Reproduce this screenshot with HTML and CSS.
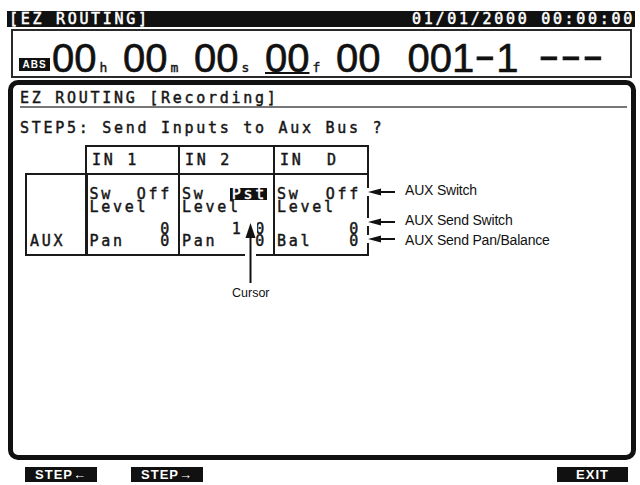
FILE: index.html
```html
<!DOCTYPE html>
<html>
<head>
<meta charset="utf-8">
<link rel="stylesheet" href="styles.css">
</head>
<body>
<div class="topbar"><span class="pre">[EZ ROUTING]</span><span class="pre">01/01/2000 00:00:00</span></div>
<div class="timebox">
  <span class="abs">ABS</span>
  <span class="grp"><span class="big">00</span><span class="unit">h</span></span>
  <span class="grp"><span class="big">00</span><span class="unit">m</span></span>
  <span class="grp"><span class="big">00</span><span class="unit">s</span></span>
  <span class="grp"><span class="big ul">00</span><span class="unit">f</span></span>
  <span class="big">00</span>
  <span class="big meas">001<span class="hy">-</span>1</span>
  <span class="big dashes"><span class="hy">-</span><span class="hy">-</span><span class="hy">-</span></span>
</div>
<div class="panel">
  <div class="ptitle pre">EZ ROUTING [Recording]</div>
  <div class="step pre">STEP5: Send Inputs to Aux Bus ?</div>
  <table class="grid">
    <colgroup><col class="c0"><col class="c1"><col class="c2"><col class="c3"></colgroup>
    <tr class="head">
      <td class="blank"></td>
      <td class="hc pre">IN 1</td>
      <td class="hc pre">IN 2</td>
      <td class="hc pre">IN  D</td>
    </tr>
    <tr class="body">
      <td class="auxc">AUX</td>
      <td class="dc first">
        <div class="ln"><span>Sw</span><span>Off</span></div>
        <div class="ln l2"><span>Level</span></div>
        <div class="ln l3 rv"><span>0</span></div>
        <div class="ln"><span>Pan</span><span>0</span></div>
      </td>
      <td class="dc">
        <div class="ln"><span>Sw</span><span class="hl">Pst</span></div>
        <div class="ln l2"><span>Level</span></div>
        <div class="ln l3 rv"><span>100</span></div>
        <div class="ln"><span>Pan</span><span>0</span></div>
      </td>
      <td class="dc">
        <div class="ln"><span>Sw</span><span>Off</span></div>
        <div class="ln l2"><span>Level</span></div>
        <div class="ln l3 rv"><span>0</span></div>
        <div class="ln"><span>Bal</span><span>0</span></div>
      </td>
    </tr>
  </table>
</div>
<div class="foot">
  <div class="btn">STEP←</div>
  <div class="btn next">STEP→</div>
  <div class="btn exit">EXIT</div>
</div>

<svg class="overlay" width="640" height="485" viewBox="0 0 640 485">
  <rect x="244" y="221" width="13" height="14" fill="#fff"/>
  <rect x="245" y="252" width="11" height="6" fill="#fff"/>
  <line x1="250.5" y1="232" x2="250.5" y2="283" stroke="#111" stroke-width="2"/>
  <polygon points="250.5,223 245.5,238 255.5,238" fill="#111"/>

  <rect x="364" y="188" width="8" height="8" fill="#fff"/>
  <rect x="364" y="218" width="8" height="8" fill="#fff"/>
  <rect x="364" y="235" width="8" height="8" fill="#fff"/>
  <g fill="#111" stroke="none">
    <polygon points="368,192 381,188.5 381,195.5"/>
    <polygon points="368,222 381,218.5 381,225.5"/>
    <polygon points="368,239 381,235.5 381,242.5"/>
  </g>
  <g stroke="#111" stroke-width="2">
    <line x1="380" y1="192" x2="395" y2="192"/>
    <line x1="380" y1="222" x2="395" y2="222"/>
    <line x1="380" y1="239" x2="395" y2="239"/>
  </g>
</svg>
<div class="note n1">AUX Switch</div>
<div class="note n2">AUX Send Switch</div>
<div class="note n3">AUX Send Pan/Balance</div>
<div class="note cur">Cursor</div>
</body>
</html>
```
FILE: styles.css
```css
html, body {
  margin: 0;
  padding: 0;
  background: #fff;
}
body {
  width: 640px;
  height: 485px;
  overflow: hidden;
  font-family: "DejaVu Sans Mono", "Liberation Mono", monospace;
  color: #161616;
}
.pre {
  white-space: pre;
}

.topbar {
  margin: 11px 5px 0 7px;
  height: 16px;
  background: #111;
  color: #fff;
  display: flex;
  justify-content: space-between;
  font-size: 15px;
  line-height: 16px;
  letter-spacing: 2.7px;
  -webkit-text-stroke: 0.5px #fff;
  padding: 0 0 0 2px;
}

.timebox {
  box-sizing: border-box;
  margin: 2px 8px 0 11px;
  height: 49px;
  border: 2px solid #2a2a2a;
  padding: 7px 0 0 6px;
  display: flex;
  align-items: baseline;
}
.abs {
  align-self: flex-end;
  margin-bottom: 5px;
  width: 31px;
  height: 13px;
  background: #111;
  color: #fff;
  font-family: "Liberation Sans", Arial, sans-serif;
  font-weight: bold;
  font-size: 10px;
  line-height: 13px;
  letter-spacing: 1px;
  text-align: center;
  margin-right: 2px;
}
.grp {
  width: 71px;
  display: flex;
  align-items: baseline;
}
.big {
  font-family: "Liberation Sans", Arial, sans-serif;
  font-size: 40px;
  line-height: 40px;
  color: #111;
  -webkit-text-stroke: 0.6px #111;
}
.ul {
  text-decoration: underline;
  text-decoration-thickness: 2px;
  text-underline-offset: 0px;
}
.unit {
  font-size: 13px;
  margin-left: 3px;
  -webkit-text-stroke: 0.4px #111;
}
.meas {
  margin-left: 27px;
}
.dashes {
  margin-left: 19px;
}
.hy {
  display: inline-block;
  width: 22px;
  text-align: center;
  transform: translateY(-3px) scaleX(1.6);
}

.panel {
  box-sizing: border-box;
  margin: 2px 4px 0 8px;
  height: 380px;
  border: 5px solid #111;
  border-radius: 10px;
  padding: 5px 4px 0 7px;
  font-size: 15px;
  letter-spacing: 2.72px;
  -webkit-text-stroke: 0.45px #161616;
}
.ptitle {
  line-height: 16px;
  border-bottom: 2px solid #777;
}
.step {
  line-height: 16px;
  margin-top: 12px;
}
.grid {
  margin: 9px 0 0 5px;
  border-collapse: collapse;
  table-layout: fixed;
  width: 342px;
}
.c0 { width: 60px; }
.c1 { width: 93px; }
.c2 { width: 95px; }
.c3 { width: 94px; }
.grid td {
  border: 2px solid #1a1a1a;
  padding: 0;
}
.grid td.blank {
  border: none;
}
.grid td.hc {
  padding: 5px;
  line-height: 16px;
  height: 16px;
}
.grid td.dc {
  padding: 14px 6px 7px 2px;
  vertical-align: top;
}
.grid td.dc.first {
  border-left-width: 3px;
}
.grid td.auxc {
  vertical-align: bottom;
  padding: 0 0 7px 3px;
  line-height: 11.5px;
}
.ln {
  display: flex;
  justify-content: space-between;
  line-height: 11.5px;
  height: 11.5px;
  white-space: pre;
}
.l2 { margin-top: 1.5px; }
.l3 { margin-top: 10.5px; }
.rv { justify-content: flex-end; }
.hl {
  display: inline-block;
  background: #111;
  color: #fff;
  -webkit-text-stroke: 0.45px #fff;
  line-height: 12px;
  height: 12px;
  padding-left: 2px;
  margin-top: -1px;
}

.foot {
  display: flex;
  margin: 7px 12px 0 25px;
}
.btn {
  width: 72px;
  height: 15px;
  background: #111;
  color: #fff;
  font-family: "Liberation Sans", Arial, sans-serif;
  font-weight: bold;
  font-size: 13px;
  line-height: 15px;
  letter-spacing: 1px;
  text-align: center;
}
.btn.next { margin-left: 34px; }
.btn.exit { margin-left: auto; width: 71px; }

.overlay {
  position: absolute;
  left: 0;
  top: 0;
  pointer-events: none;
}
.note {
  position: absolute;
  font-family: "Liberation Sans", Arial, sans-serif;
  font-size: 14px;
  line-height: 16px;
  letter-spacing: -0.2px;
  color: #111;
  white-space: nowrap;
}
.n1 { left: 405px; top: 182px; }
.n2 { left: 405px; top: 212px; }
.n3 { left: 405px; top: 232px; }
.cur { left: 232px; top: 285px; font-size: 12.5px; letter-spacing: 0; }
```
